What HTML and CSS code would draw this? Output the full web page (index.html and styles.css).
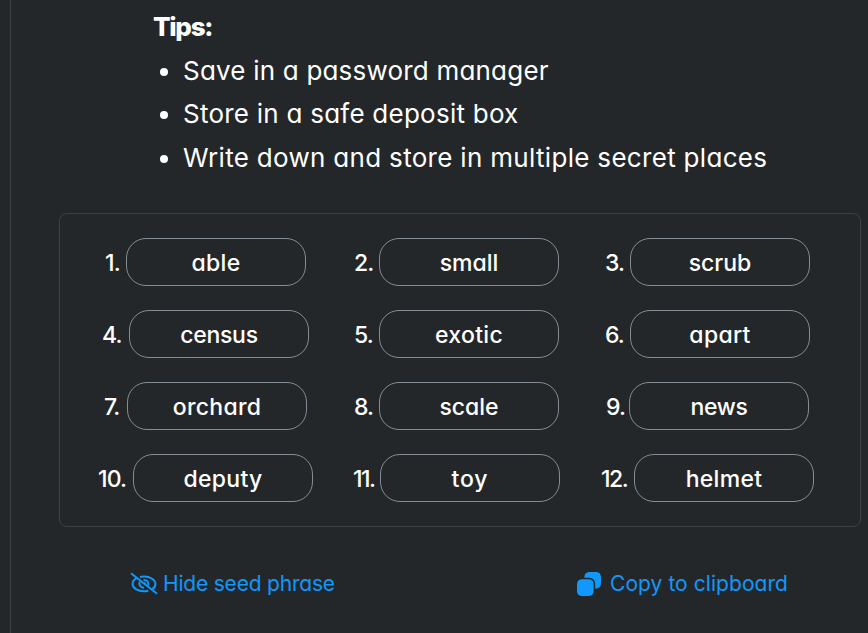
FILE: index.html
```html
<!DOCTYPE html>
<html lang="en">
<head>
<meta charset="utf-8">
<title>Seed phrase</title>
<link rel="stylesheet" href="styles.css">
</head>
<body>
<main class="page">
  <section class="tips">
    <h2 class="tips-title">Tips:</h2>
    <ul class="tips-list">
      <li><span class="tip-save">Save in a password manager</span></li>
      <li><span class="tip-store">Store in a safe deposit box</span></li>
      <li><span class="tip-write">Write down and store in multiple secret places</span></li>
    </ul>
  </section>
  <section class="phrase">
    <div class="word"><span class="num num-one">1.</span><span class="chip wide">able</span></div>
    <div class="word"><span class="num">2.</span><span class="chip">small</span></div>
    <div class="word"><span class="num">3.</span><span class="chip">scrub</span></div>
    <div class="word"><span class="num num-four">4.</span><span class="chip tight">census</span></div>
    <div class="word"><span class="num">5.</span><span class="chip wide">exotic</span></div>
    <div class="word"><span class="num">6.</span><span class="chip wide">apart</span></div>
    <div class="word"><span class="num num-seven">7.</span><span class="chip wide">orchard</span></div>
    <div class="word"><span class="num">8.</span><span class="chip">scale</span></div>
    <div class="word"><span class="num num-nine">9.</span><span class="chip tight">news</span></div>
    <div class="word"><span class="num num-ten">10.</span><span class="chip wide">deputy</span></div>
    <div class="word"><span class="num num-eleven">11.</span><span class="chip wider">toy</span></div>
    <div class="word"><span class="num num-twelve">12.</span><span class="chip wide">helmet</span></div>
  </section>
  <div class="actions">
    <a class="action hide"><svg class="icon-eye" viewBox="0 0 28 24"><g fill="none" stroke="currentColor" stroke-width="2"><path d="M6.800 5.800C4 7.300 2.600 9.800 2.600 12c0 4 5 7.300 11.400 7.300 1.600 0 3-.2 4.300-.6M10 5c1.300-.4 2.600-.5 4-.5 6.500 0 11.400 3.500 11.400 7.500 0 2-1.200 4-3 5.200M9.700 9.700c-1.300 3 .9 6.100 4.300 6.100M13.500 8c3.600-.2 5.900 2.900 4.700 5.700M14 11.200c1 0 1.500.6 1.500 1.300"/><path d="M1 1.300 27 21.700"/></g></svg><span class="hide-text">Hide seed phrase</span></a>
    <a class="action copy"><svg class="icon-copy" viewBox="0 0 24 24" fill="currentColor"><path d="M7.300 5.700C7.700 1.600 9.200 0 13.500 0h4.300C22.600 0 24 1.500 24 6.200v4.300c0 4.200-1.500 5.800-5.800 6.200v-3.500c0-5.600-1.900-7.500-7.500-7.500z"/><path d="M6.200 7.200h4.300c4.700 0 6.200 1.500 6.200 6.200v4.300c0 4.800-1.500 6.300-6.200 6.300H6.200C1.500 24 0 22.500 0 17.700v-4.300C0 8.700 1.500 7.200 6.200 7.200z"/></svg><span class="copy-text">Copy to clipboard</span></a>
  </div>
</main>
</body>
</html>
```
FILE: styles.css
```css
* { box-sizing: border-box; }
body {
  margin: 0;
  background: #24272a;
  color: #fff;
  font-family: Inter, "Liberation Sans", sans-serif;
  font-feature-settings: "cv11", "ss03";
}
.page {
  height: 633px;
  margin-left: 10px;
  border-left: 1px solid #3b4046;
  overflow: hidden;
}
.tips { padding: 5px 0 0 142px; }
.tips-title { margin: 0; font-size: 26px; line-height: 44px; font-weight: 800; letter-spacing: -1.3px; }
.tips-list { margin: 0; padding: 0; list-style: none; font-size: 26px; white-space: nowrap; }
.tips-list li { display: flex; align-items: center; height: 43px; }
.tips-list li:last-child { height: 44.5px; }
.tips-list li::before { content: ""; width: 8px; height: 8px; margin: 3px 15px 0 7px; border-radius: 50%; background: #fff; }
.tip-save { letter-spacing: 0.2px; }
.tip-store { letter-spacing: 0.24px; }
.tip-write { letter-spacing: 0.31px; }
.phrase {
  display: grid;
  grid-template-columns: repeat(3, 251px);
  row-gap: 24px;
  width: 802px;
  height: 314px;
  margin: 33px 0 0 48px;
  padding: 24px 20px;
  border: 1px solid #3b4046;
  border-radius: 8px;
}
.word { display: flex; align-items: center; justify-content: center; height: 48px; font-size: 23px; font-weight: 500; }
.num { width: 25px; padding-top: 2px; white-space: nowrap; letter-spacing: -0.9px; }
.num-one { width: 21px; }
.num-four, .num-eleven { width: 27px; }
.num-seven, .num-nine { width: 23px; }
.num-ten { width: 35px; }
.num-twelve { width: 33px; }
.num-eleven, .num-twelve { letter-spacing: -1.5px; }
.chip {
  display: flex;
  align-items: center;
  justify-content: center;
  width: 180px;
  height: 48px;
  padding-top: 2px;
  border: 1px solid #848c96;
  border-radius: 20px;
}
.wide { letter-spacing: 0.3px; }
.wider { letter-spacing: 0.9px; }
.tight { letter-spacing: -0.3px; }
.actions { display: flex; margin-top: 41px; padding-left: 119px; color: #1098fc; font-size: 21px; line-height: 32px; white-space: nowrap; }
.action { display: flex; align-items: center; }
.hide { width: 447px; }
.icon-eye { width: 28px; height: 24px; margin-right: 5px; }
.icon-copy { width: 24px; height: 24px; margin-right: 9px; }
.hide-text { letter-spacing: -0.2px; }
.copy-text { letter-spacing: 0.06px; }
```
